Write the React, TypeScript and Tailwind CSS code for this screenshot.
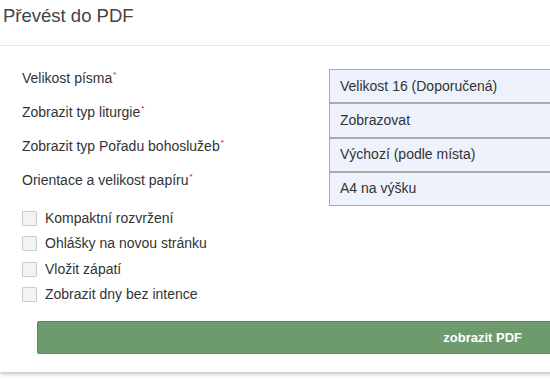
import React from 'react';

const labels = [
  'Velikost písma',
  'Zobrazit typ liturgie',
  'Zobrazit typ Pořadu bohoslužeb',
  'Orientace a velikost papíru',
];

const selects = [
  'Velikost 16 (Doporučená)',
  'Zobrazovat',
  'Výchozí (podle místa)',
  'A4 na výšku',
];

const checks = [
  'Kompaktní rozvržení',
  'Ohlášky na novou stránku',
  'Vložit zápatí',
  'Zobrazit dny bez intence',
];

export default function App() {
  return (
    <div className="w-[550px] h-[380px] overflow-hidden bg-white font-['Liberation_Sans',Arial,sans-serif] text-[#333]">
      <div className="w-[620px] h-[372px] bg-white shadow-[0_2px_4px_rgba(0,0,0,0.25)]">
        {/* hlavička */}
        <div className="h-[46px] border-b border-[#e5e5e5] pl-[3px] pt-[5px]">
          <h1 className="text-[18.5px] leading-[22px] text-[#444]">Převést do PDF</h1>
        </div>

        {/* formulář */}
        <div className="pt-[23px] pl-[22px] flex h-[160px]">
          <div className="w-[307px] flex flex-col pt-[1px]">
            {labels.map((l) => (
              <div key={l} className="h-[34.6px] text-[14px] leading-[16px]">
                {l}
                <span className="relative -top-[6px] text-red-600 text-[8px] leading-none ml-[1px]">*</span>
              </div>
            ))}
          </div>
          <div className="flex flex-col w-[280px]">
            {selects.map((s) => (
              <div
                key={s}
                className="h-[34.25px] border border-[#aaa] bg-[#eef2fc] pl-[10px] flex items-center text-[14px]"
              >
                {s}
              </div>
            ))}
          </div>
        </div>

        <div className="pl-[22px] flex flex-col">
          {checks.map((c) => (
            <label key={c} className="h-[25.3px] flex items-center gap-[8px] text-[14px]">
              <span className="w-[15px] h-[15px] border border-[#ccc] bg-[#f3f3f3] rounded-[1px]" />
              {c}
            </label>
          ))}
        </div>

        <div className="pl-[37px] pt-[14px]">
          <button className="w-[560px] h-[33px] bg-[#6e9b6e] border border-[#5b875b] rounded-[2px] text-white font-bold text-[13px] text-right pr-[74px]">
            zobrazit PDF
          </button>
        </div>
      </div>
    </div>
  );
}
